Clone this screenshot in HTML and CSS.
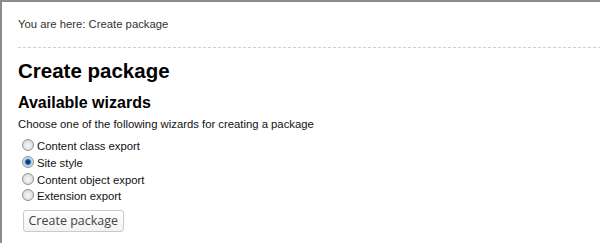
FILE: index.html
```html
<!DOCTYPE html>
<html lang="en">
<head>
<meta charset="utf-8">
<title>Create package</title>
<link rel="stylesheet" href="styles.css">
</head>
<body>
<div class="page">
  <div class="crumbs">You are here: Create package</div>
  <div class="rule"></div>
  <div class="main">
    <h1 class="title">Create package</h1>
    <h2 class="subtitle">Available wizards</h2>
    <p class="intro">Choose one of the following wizards for creating a package</p>
    <form class="wizards">
      <label class="opt"><input class="radio" type="radio" name="wizard"><span class="opt-text">Content class export</span></label>
      <label class="opt"><input class="radio" type="radio" name="wizard" checked><span class="opt-text">Site style</span></label>
      <label class="opt"><input class="radio" type="radio" name="wizard"><span class="opt-text">Content object export</span></label>
      <label class="opt"><input class="radio" type="radio" name="wizard"><span class="opt-text">Extension export</span></label>
      <button class="btn" type="button">Create package</button>
    </form>
  </div>
</div>
</body>
</html>
```
FILE: styles.css
```css
html, body {
  margin: 0;
  height: 100%;
}
body {
  background: #fff;
  font-family: "Liberation Sans", Arial, sans-serif;
  color: #111;
}
.page {
  box-sizing: border-box;
  min-height: 100%;
  border-top: 2px solid #8c8c8c;
  border-left: 2px solid #8c8c8c;
  padding-left: 16px;
}
.crumbs {
  padding: 16px 0;
  font-size: 11.3px;
  line-height: 13px;
  color: #333;
}
.rule {
  height: 1px;
  background: repeating-linear-gradient(to right, #cfcfcf 0 3px, transparent 3px 5px);
}
.title {
  margin: 10.5px 0 0;
  font-size: 20.5px;
  line-height: 23px;
  font-weight: bold;
  color: #000;
}
.subtitle {
  margin: 12px 0 0;
  font-size: 16px;
  line-height: 18px;
  font-weight: bold;
  color: #000;
}
.intro {
  margin: 6.5px 0 0;
  font-size: 11.3px;
  line-height: 13px;
  color: #111;
}
.wizards {
  margin: 7.3px 0 0;
  display: flex;
  flex-direction: column;
  align-items: flex-start;
}
.opt {
  display: flex;
  align-items: flex-start;
  height: 16.67px;
  line-height: 16.67px;
  font-size: 11.3px;
  color: #111;
}
.radio {
  -webkit-appearance: none;
  appearance: none;
  box-sizing: border-box;
  width: 12px;
  height: 12px;
  margin: 1px 3px 0 4px;
  border: 1px solid #8f9090;
  border-radius: 50%;
  background: radial-gradient(circle at 50% 55%, #f6f6f6 0, #e4e4e4 55%, #d2d2d2 80%, #eeeeee 100%);
}
.radio:checked {
  background: radial-gradient(circle at 50% 50%, #0b2a57 0, #14417e 1.6px, #2f78c4 2.6px, #a9d1f3 3.6px, #dcdcdc 4.4px, #ededed 100%);
}
.btn {
  display: block;
  box-sizing: border-box;
  height: 22px;
  margin: 5px 0 0 4.5px;
  padding: 0 5px;
  font-family: "Open Sans", "Liberation Sans", sans-serif;
  font-size: 12.5px;
  line-height: 20px;
  color: #444;
  border: 1px solid #cacaca;
  border-radius: 3px;
  background: linear-gradient(#ffffff, #f2f2f2);
}
```
